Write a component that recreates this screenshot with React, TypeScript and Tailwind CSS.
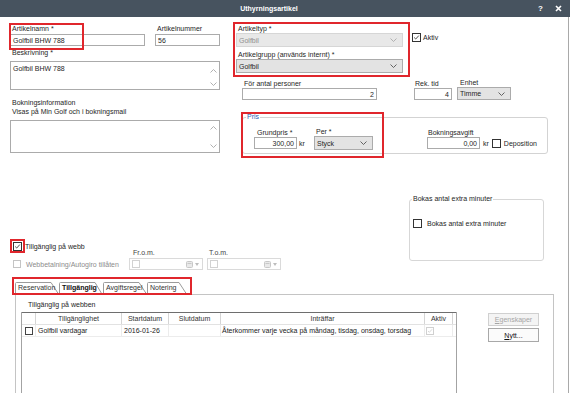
import React from "react";

function Chev({ up = false, color = "#5a5a5a" }: { up?: boolean; color?: string }) {
  return (
    <svg width="7" height="4" viewBox="0 0 7 4" className="block shrink-0">
      <polyline
        points={up ? "0.5,3.5 3.5,0.5 6.5,3.5" : "0.5,0.5 3.5,3.5 6.5,0.5"}
        fill="none"
        stroke={color}
        strokeWidth="0.9"
      />
    </svg>
  );
}

function Box({
  className = "",
  checked = false,
  checkColor = "#222",
}: {
  className?: string;
  checked?: boolean;
  checkColor?: string;
}) {
  return (
    <span className={"relative block shrink-0 bg-white border " + className}>
      {checked && (
        <svg viewBox="0 0 9 9" className="absolute inset-0 w-full h-full">
          <polyline points="1.5,4.5 3.5,6.5 7.5,2" fill="none" stroke={checkColor} strokeWidth="1" />
        </svg>
      )}
    </span>
  );
}

function TB({ className = "", children }: { className?: string; children?: React.ReactNode }) {
  return (
    <div
      className={
        "h-[12px] border border-[#ababab] bg-white flex items-center px-[2px] whitespace-nowrap overflow-hidden " +
        className
      }
    >
      {children}
    </div>
  );
}

function Sel({
  className = "",
  children,
  disabled = false,
}: {
  className?: string;
  children?: React.ReactNode;
  disabled?: boolean;
}) {
  return (
    <div
      className={
        "flex items-center border pl-[2px] pr-[5px] " +
        (disabled ? "bg-[#e8e8e8] border-[#d6d6d6] text-[#8f8f8f] " : "bg-[#e3e3e3] border-[#ababab] ") +
        className
      }
    >
      <span className="flex-1 whitespace-nowrap">{children}</span>
      <Chev color={disabled ? "#aaaaaa" : "#555555"} />
    </div>
  );
}

function RedBox({ className = "" }: { className?: string }) {
  return <div className={"absolute border-2 border-[#e0262c] pointer-events-none " + className} />;
}

function DateCol({ label, className = "", labelClass = "" }: { label: string; className?: string; labelClass?: string }) {
  return (
    <div className={"w-[74px] shrink-0 " + className}>
      <div className={"h-[9px] text-[#444] " + labelClass}>{label}</div>
      <div className="mt-[1px] h-[12px] border border-[#dadada] bg-white flex items-center pl-[2px] pr-[3px]">
        <span className="block w-[8px] h-[8px] border border-[#d2d2d2]" />
        <svg width="7" height="7" viewBox="0 0 7 7" className="ml-auto block">
          <rect x="0.5" y="0.5" width="6" height="6" rx="1" fill="#e9e9e9" stroke="#c8c8c8" />
          <line x1="1.5" y1="2.5" x2="5.5" y2="2.5" stroke="#c8c8c8" />
        </svg>
        <svg width="4" height="3" viewBox="0 0 4 3" className="ml-[2px] block">
          <polygon points="0,0 4,0 2,3" fill="#bdbdbd" />
        </svg>
      </div>
    </div>
  );
}

function Tab({
  w,
  cls,
  label,
  active = false,
}: {
  w: number;
  cls: string;
  label: string;
  active?: boolean;
}) {
  const b = active ? 13 : 12;
  return (
    <div className={"relative h-[12px] shrink-0 " + cls + (active ? " z-10 font-bold text-[#111]" : " text-[#333]")}>
      <svg className="absolute left-0 top-0" width={w} height={13} viewBox={`0 0 ${w} 13`}>
        <path
          d={`M0.5 ${b} V1.5 Q0.5 0.5 1.5 0.5 H${w - 8} L${w - 0.5} ${b}`}
          fill="#ffffff"
          stroke="#9b9b9b"
          strokeWidth="1"
        />
      </svg>
      <span className="relative block pl-[3px] leading-[12px] whitespace-nowrap">{label}</span>
    </div>
  );
}

export default function App() {
  return (
    <div className="w-[570px] h-[393px] overflow-hidden bg-white text-[7px] leading-[9px] text-[#262626] font-['Liberation_Sans',Arial,sans-serif]">
      {/* Title bar */}
      <div className="h-[17px] bg-[#47535f] flex items-center text-white font-bold">
        <div className="w-[538px] text-center">Uthyrningsartikel</div>
        <div className="w-[5px] text-[8px] leading-[8px]">?</div>
        <svg className="ml-[12px] block" width="7" height="7" viewBox="0 0 7 7">
          <path d="M1 1L6 6M6 1L1 6" stroke="white" strokeWidth="1.6" />
        </svg>
      </div>

      {/* Body */}
      <div className="w-[569px] h-[376px] border-r border-[#a9a9a9] pl-[10px] pt-[7px] overflow-hidden">
        {/* Top section */}
        <div className="flex">
          {/* Left column */}
          <div className="w-[210px] shrink-0">
            <div className="flex gap-[10px]">
              <div className="relative w-[135px]">
                <div className="h-[10px] pl-[2px]">Artikelnamn *</div>
                <TB>Golfbil BHW 788</TB>
                <RedBox className="left-[-1px] top-[-1px] w-[75px] h-[27px]" />
              </div>
              <div className="w-[65px]">
                <div className="h-[10px] pl-[2px]">Artikelnummer</div>
                <TB>56</TB>
              </div>
            </div>
            <div className="mt-[2px] h-[10px] pl-[2px]">Beskrivning *</div>
            <div className="mt-[3px] relative h-[29px] border border-[#ababab] bg-white px-[2px] pt-[2px]">
              Golfbil BHW 788
              <div className="absolute right-[2px] top-[7px]">
                <Chev up color="#a8a8a8" />
              </div>
              <div className="absolute right-[2px] bottom-[3px]">
                <Chev color="#a8a8a8" />
              </div>
            </div>
            <div className="mt-[8px] pl-[2px]">
              Bokningsinformation
              <br />
              Visas på Min Golf och i bokningsmail
            </div>
            <div className="mt-[4px] relative h-[33px] border border-[#ababab] bg-white">
              <div className="absolute right-[2px] top-[5px]">
                <Chev up color="#a8a8a8" />
              </div>
              <div className="absolute right-[2px] bottom-[4px]">
                <Chev color="#a8a8a8" />
              </div>
            </div>
          </div>

          {/* Right column */}
          <div className="relative ml-[16px]">
            <div className="flex">
              <div className="w-[167px]">
                <div className="h-[9px] pl-[2px]">Artikeltyp *</div>
                <Sel disabled className="h-[14px]">
                  Golfbil
                </Sel>
                <div className="mt-[3px] h-[9px] pl-[2px]">Artikelgrupp (används internt) *</div>
                <Sel className="h-[14px]">Golfbil</Sel>
              </div>
              <div className="ml-[9px] mt-[9px] h-[9px] flex items-center">
                <Box checked className="w-[9px] h-[9px] border-[#333]" />
                <span className="ml-[2px]">Aktiv</span>
              </div>
            </div>
            <RedBox className="left-[-3px] top-[-2px] w-[177px] h-[55px]" />

            <div className="ml-[6px] mt-[6px] flex items-end">
              <div className="w-[135px]">
                <div className="h-[9px] pl-[2px]">För antal personer</div>
                <TB className="justify-end">2</TB>
              </div>
              <div className="ml-[37px] w-[38px]">
                <div className="h-[9px] pl-[1px]">Rek. tid</div>
                <TB className="justify-end">4</TB>
              </div>
              <div className="ml-[5px] w-[54px]">
                <div className="h-[8px] leading-[8px] pl-[3px]">Enhet</div>
                <Sel className="h-[13px]">Timme</Sel>
              </div>
            </div>

            <div className="relative ml-[6px] mt-[13px] w-[306px]">
              <fieldset className="border border-[#d3d3d3] rounded-[3px]">
                <legend className="ml-[3px] px-[1px] leading-[8px] text-[#2f62b8]">Pris</legend>
                <div className="flex items-end pl-[11px] pt-[6px] pb-[3px]">
                  <div className="w-[43px]">
                    <div className="h-[9px] pl-[3px]">Grundpris *</div>
                    <TB className="justify-end mb-[1px]">300,00</TB>
                  </div>
                  <div className="w-[17px] pl-[2px] h-[12px] mb-[1px] flex items-center">kr</div>
                  <div className="w-[59px]">
                    <div className="h-[9px] pl-[2px]">Per *</div>
                    <Sel className="h-[14px]">Styck</Sel>
                  </div>
                  <div className="ml-[54px] w-[53px]">
                    <div className="h-[9px] pl-[1px]">Bokningsavgift</div>
                    <TB className="justify-end mb-[1px]">0,00</TB>
                  </div>
                  <div className="h-[12px] mb-[1px] flex items-center">
                    <span className="ml-[3px]">kr</span>
                    <Box className="ml-[3px] w-[9px] h-[9px] border-[#333]" />
                    <span className="ml-[3px]">Deposition</span>
                  </div>
                </div>
              </fieldset>
              <RedBox className="left-[-1px] top-[-1px] w-[143px] h-[46px]" />
            </div>
          </div>
        </div>

        {/* Middle row */}
        <div className="flex">
          <div className="mt-[87px] w-[271px] shrink-0 flex items-end">
            <div className="w-[119px] shrink-0 pb-[1px]">
              <div className="relative h-[10px] pl-[3px] flex items-center">
                <Box checked className="w-[9px] h-[9px] border-[#333]" />
                <span className="ml-[3px]">Tillgänglig på webb</span>
                <RedBox className="left-0 top-[-2px] w-[15px] h-[14px]" />
              </div>
              <div className="mt-[8px] h-[10px] pl-[3px] flex items-center text-[#8c8c8c]">
                <Box className="w-[8px] h-[8px] border-[#c4c4c4]" />
                <span className="ml-[5px] whitespace-nowrap">Webbetalning/Autogiro tillåten</span>
              </div>
            </div>
            <DateCol label="Fr.o.m." labelClass="pl-[4px]" />
            <DateCol label="T.o.m." className="ml-[4px]" labelClass="pl-[2px]" />
          </div>
          <fieldset className="ml-[128px] mt-[41px] w-[135px] h-[66px] border border-[#d7d7d7] rounded-[3px]">
            <legend className="ml-[2px] px-[1px] leading-[8px]">Bokas antal extra minuter</legend>
            <div className="pl-[3px] pt-[15px] h-[25px] flex items-center">
              <Box className="w-[9px] h-[9px] border-[#333]" />
              <span className="ml-[5px]">Bokas antal extra minuter</span>
            </div>
          </fieldset>
        </div>

        {/* Tabs */}
        <div className="relative mt-[12px] ml-[5px] h-[12px] flex">
          <Tab w={44} cls="w-[44px]" label="Reservation" />
          <Tab w={44} cls="w-[44px]" label="Tillgänglig" active />
          <Tab w={44} cls="w-[44px]" label="Avgiftsregel" />
          <Tab w={40} cls="w-[40px]" label="Notering" />
          <RedBox className="left-[-3px] top-[-5px] w-[180px] h-[18px] z-20" />
        </div>

        {/* Tab panel */}
        <div className="ml-[5px] w-[539px] h-[110px] border-t border-l border-r border-[#c4c4c4] flex">
          <div className="pl-[5px] pt-[5px]">
            <div className="h-[9px] pl-[7px]">Tillgänglig på webben</div>
            <div className="mt-[3px] w-[436px] h-[95px] border-l border-r border-[#a3a3a3] bg-white">
              <div className="flex h-[13px] border-t border-t-[#6e6e6e] border-b border-b-[#e2e2e2] text-[#333] leading-[11px]">
                <div className="w-[14px] border-r border-[#d5d5d5]" />
                <div className="w-[86px] border-r border-[#d5d5d5] text-center">Tillgänglighet</div>
                <div className="w-[47px] border-r border-[#d5d5d5] text-center">Startdatum</div>
                <div className="w-[52px] border-r border-[#d5d5d5] text-center">Slutdatum</div>
                <div className="w-[204px] border-r border-[#d5d5d5] text-center">Inträffar</div>
                <div className="w-[28px] border-r border-[#d5d5d5] text-center">Aktiv</div>
                <div className="w-[3px]" />
              </div>
              <div className="flex h-[12px] border-b border-[#ececec] leading-[11px] text-[#222]">
                <div className="w-[14px] border-r border-[#ececec] flex items-center justify-center">
                  <Box className="w-[8px] h-[8px] border-[#444]" />
                </div>
                <div className="w-[86px] border-r border-[#ececec] pl-[2px] whitespace-nowrap overflow-hidden">
                  Golfbil vardagar
                </div>
                <div className="w-[47px] border-r border-[#ececec] pl-[2px] whitespace-nowrap overflow-hidden">
                  2016-01-26
                </div>
                <div className="w-[52px] border-r border-[#ececec]" />
                <div className="w-[204px] border-r border-[#ececec] pl-[1px] whitespace-nowrap overflow-hidden">
                  Återkommer varje vecka på måndag, tisdag, onsdag, torsdag
                </div>
                <div className="w-[28px] border-r border-[#ececec] pl-[1px] flex items-center">
                  <Box checked className="w-[8px] h-[8px] border-[#d0d0d0]" checkColor="#c4c4c4" />
                </div>
                <div className="w-[3px]" />
              </div>
            </div>
          </div>
          <div className="ml-[31px] mt-[18px]">
            <div className="w-[51px] h-[13px] border border-[#d0d0d0] bg-[#f4f4f4] text-[#a5a5a5] flex items-center justify-center">
              <span>
                <span className="underline">E</span>genskaper
              </span>
            </div>
            <div className="mt-[2px] w-[51px] h-[14px] border border-[#a8a8a8] bg-[#fbfbfb] text-[#111] flex items-center justify-center">
              <span>
                <span className="underline">N</span>ytt...
              </span>
            </div>
          </div>
        </div>
      </div>
    </div>
  );
}
